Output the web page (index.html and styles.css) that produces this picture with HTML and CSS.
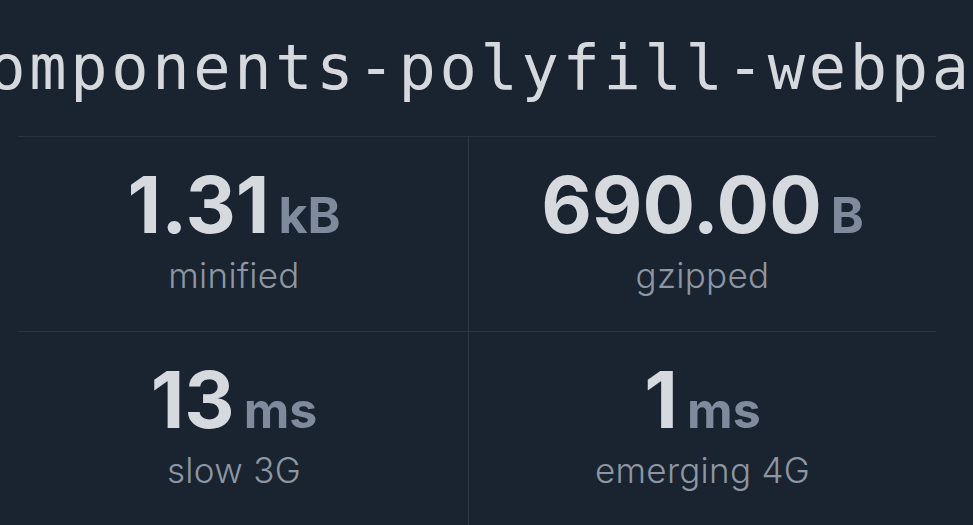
FILE: index.html
```html
<!DOCTYPE html>
<html lang="en">
<head>
<meta charset="utf-8">
<title>web-components-polyfill-webpack-plugin</title>
<link rel="stylesheet" href="styles.css">
</head>
<body>
<main class="page">
  <h1 class="package-name">web-components-polyfill-webpack-plugin</h1>
  <section class="stats">
    <div class="stat stat-left">
      <div class="stat-value">1.31<span class="stat-unit">kB</span></div>
      <div class="stat-label">minified</div>
    </div>
    <div class="stat stat-right">
      <div class="stat-value">690.00<span class="stat-unit">B</span></div>
      <div class="stat-label">gzipped</div>
    </div>
    <div class="stat stat-left">
      <div class="stat-value">13<span class="stat-unit">ms</span></div>
      <div class="stat-label">slow 3G</div>
    </div>
    <div class="stat stat-right">
      <div class="stat-value">1<span class="stat-unit">ms</span></div>
      <div class="stat-label">emerging 4G</div>
    </div>
  </section>
</main>
</body>
</html>
```
FILE: styles.css
```css
html, body {
  margin: 0;
  padding: 0;
  background: #1a2330;
  height: 100%;
  overflow: hidden;
}

.page {
  width: 973px;
  overflow: hidden;
}

.package-name {
  margin: 28px 0 0 -217px;
  font-family: "DejaVu Sans Mono", monospace;
  font-weight: normal;
  font-size: 62px;
  letter-spacing: 3.7px;
  line-height: 80px;
  color: #d5d8dd;
  white-space: nowrap;
}

.stats {
  margin-top: 28px;
  width: 936px;
  display: grid;
  grid-template-columns: 468px 468px;
}

.stat {
  box-sizing: border-box;
  height: 195px;
  padding-top: 29px;
  text-align: center;
  border-top: 1px solid #29333f;
}

.stat-left {
  border-image: linear-gradient(to right, transparent 19px, #29333f 19px) 1;
  border-image-width: 1px 0 0 0;
}

.stat-right {
  border-left: 1px solid #2d3845;
}

.stat-value {
  font-family: Inter, "Noto Sans", sans-serif;
  font-weight: 700;
  font-size: 78px;
  line-height: 78px;
  color: #d6d9de;
}

.stat-unit {
  margin-left: 9px;
  font-size: 50px;
  line-height: 0;
  color: #7f8b9c;
}

.stat-label {
  margin-top: 10px;
  font-family: Inter, "Noto Sans", sans-serif;
  font-weight: 300;
  font-size: 35px;
  line-height: 42px;
  letter-spacing: 0.3px;
  color: #8d97a3;
}
```
